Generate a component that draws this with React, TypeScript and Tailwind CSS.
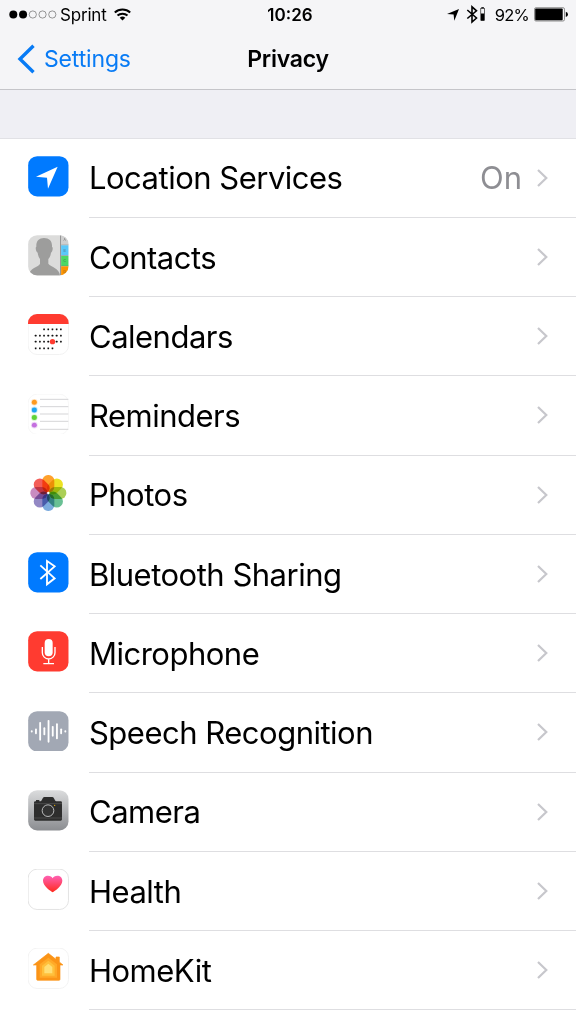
import React from 'react';

interface IconProps {
  children: React.ReactNode;
}

const Icon: React.FC<IconProps> = ({ children }) => (
  <svg viewBox="0 0 122 122" className="block h-[40.67px] w-[40.67px]">
    {children}
  </svg>
);

interface TileProps {
  fill: string;
  stroke?: string;
}

const Tile: React.FC<TileProps> = ({ fill, stroke = 'none' }) => (
  <rect x="0.5" y="0.5" width="121" height="121" rx="27" fill={fill} stroke={stroke} strokeWidth="2.5" />
);

const LocationIcon = () => (
  <Icon>
    <Tile fill="#007aff" />
    <path d="M89 32 60 98 57 65 24 62Z" fill="#fff" />
  </Icon>
);

const tabs = [
  { y: 0, color: '#cfcfcf', letter: 'A' },
  { y: 31, color: '#5ac8fa', letter: 'B' },
  { y: 63, color: '#4cd964', letter: 'C' },
  { y: 94, color: '#ff9500', letter: 'D' },
];

const ContactsIcon = () => (
  <Icon>
    <clipPath id="contacts">
      <rect x="0.5" y="0.5" width="121" height="121" rx="27" />
    </clipPath>
    <g clipPath="url(#contacts)">
      <rect width="122" height="122" fill="#dcdcdb" />
      <path
        d="M48 9C33 9 24 18 25 35C21 37 24 51 29 53C30 62 33 68 36 72V86C32 96 4 98 2 122H96C95 100 69 96 61 86V72C66 67 68 60 69 53C74 50 76 37 72 35C73 18 64 9 48 9Z"
        fill="#9d9d9c"
      />
      <rect x="97" width="2.5" height="122" fill="#777" />
      {tabs.map((tab) => (
        <g key={tab.letter}>
          <rect x="99.5" y={tab.y} width="23" height="30" fill={tab.color} />
          <rect x="99.5" y={tab.y + 29} width="23" height="2" fill="#777" opacity=".6" />
          <text
            x="110"
            y={tab.y + 19}
            fontSize="10"
            textAnchor="middle"
            fill="#444"
            fillOpacity=".7"
            fontFamily="Inter, sans-serif"
          >
            {tab.letter}
          </text>
        </g>
      ))}
    </g>
  </Icon>
);

// first and last visible day of each week
const weeks = [
  { y: 46, from: 2, to: 6 },
  { y: 65, from: 0, to: 6 },
  { y: 83, from: 0, to: 6 },
  { y: 103, from: 0, to: 4 },
];

const CalendarIcon = () => (
  <Icon>
    <Tile fill="#fff" stroke="#efefef" />
    <path d="M0 30V27A27 27 0 0 1 27 0H95A27 27 0 0 1 122 27V30Z" fill="#ff3b30" />
    {weeks.map((week) =>
      [0, 1, 2, 3, 4, 5, 6]
        .filter((day) => day >= week.from && day <= week.to)
        .map((day) => (
          <rect key={`${week.y}-${day}`} x={20.5 + day * 12.6} y={week.y - 2.5} width="5" height="5" rx="1" fill="#111" />
        ))
    )}
    <circle cx="73.5" cy="83" r="8" fill="#ff3b30" />
  </Icon>
);

const RemindersIcon = () => (
  <Icon>
    <Tile fill="#fff" stroke="#f5f5f5" />
    {['#ff9a1f', '#1fa5f0', '#5fd338', '#c470df'].map((color, i) => (
      <g key={color}>
        <circle cx="19" cy={25 + i * 22.8} r="10" fill={color} opacity=".25" />
        <circle cx="19" cy={25 + i * 22.8} r="7.5" fill={color} />
      </g>
    ))}
    {[16, 38, 60, 82, 106].map((y) => (
      <path key={y} d={`M36 ${y}H121`} stroke="#d5d5d7" strokeWidth="3" />
    ))}
  </Icon>
);

const petals = ['#ff9a1c', '#ebe012', '#a5cc4a', '#5dbb8c', '#72a5dc', '#8b7fc0', '#c583bd', '#f2524b'];

const PhotosIcon = () => (
  <Icon>
    <g className="isolate">
      {petals.map((color, i) => (
        <rect
          key={color}
          x="43"
          y="6"
          width="36"
          height="52"
          rx="17"
          fill={color}
          opacity=".93"
          transform={`rotate(${i * 45} 61 60)`}
          className="mix-blend-multiply"
        />
      ))}
    </g>
    <circle cx="61" cy="60" r="3.5" fill="#fff" />
  </Icon>
);

const BluetoothIcon = () => (
  <Icon>
    <Tile fill="#007aff" />
    <path d="M37 40 80 79 57 97V27L80 43 37 81" fill="none" stroke="#fff" strokeWidth="5.5" />
  </Icon>
);

const MicrophoneIcon = () => (
  <Icon>
    <Tile fill="#ff3b30" />
    <rect x="50" y="24" width="24" height="52" rx="12" fill="#fff" />
    <path d="M43 48V65A19 19 0 0 0 81 65V48M62 84V97M46 98H78" fill="none" stroke="#fff" strokeWidth="4" />
  </Icon>
);

const bars = [7, 17, 56, 24, 68, 32, 48, 17, 7];

const SpeechIcon = () => (
  <Icon>
    <Tile fill="#a2a8b4" />
    {bars.map((height, i) => (
      <rect key={i} x={8.5 + i * 12.6} y={61 - height / 2} width="5.5" height={height} rx="2.5" fill="#fff" />
    ))}
  </Icon>
);

const CameraIcon = () => (
  <Icon>
    <linearGradient id="camera" x2="0" y2="1">
      <stop stopColor="#dbdcdd" />
      <stop offset="1" stopColor="#8b8d91" />
    </linearGradient>
    <Tile fill="url(#camera)" />
    <path
      d="M18 38Q18 34 22 34H24V30H34V34H38Q41 33 43 27Q45 21 49 21H73Q77 21 79 27Q81 33 84 34H98Q102 34 102 38V88Q102 92 98 92H22Q18 92 18 88Z"
      fill="#2d2d2d"
    />
    <path d="M18 41H102M18 84H102" stroke="#5a5a5a" strokeWidth="2" />
    <circle cx="60" cy="62" r="21" fill="#2d2d2d" />
    <circle cx="60" cy="62" r="17.5" fill="#333" stroke="#b9babb" strokeWidth="3" />
    <circle cx="80" cy="46" r="2" fill="#f5b800" />
  </Icon>
);

const HealthIcon = () => (
  <Icon>
    <linearGradient id="heart" x2="0" y2="1">
      <stop stopColor="#ff61b5" />
      <stop offset="1" stopColor="#ff2a1c" />
    </linearGradient>
    <Tile fill="#fff" stroke="#dedede" />
    <path
      d="M74 70C69 66 45 52 45 35C45 26 52 20 60 20C67 20 72 23 74 28C76 23 81 20 88 20C96 20 103 26 103 35C103 52 79 66 74 70Z"
      fill="url(#heart)"
    />
  </Icon>
);

const HomeIcon = () => (
  <Icon>
    <Tile fill="#fff" stroke="#f0f0f0" />
    <path
      d="M61 16 84 34V27H94V42L105 51H96V94Q96 97 93 97H29Q26 97 26 94V51H16Z"
      fill="#fb9417"
      stroke="#fb9417"
      strokeWidth="2"
      strokeLinejoin="round"
    />
    <path d="M61 29 87 49V89H35V49Z" fill="#ffa928" />
    <path d="M61 38 80 53V83H42V53Z" fill="#ffc03c" />
    <path d="M61 47 73 57V76H49V57Z" fill="#ffde75" />
  </Icon>
);

interface Row {
  label: string;
  icon: React.ReactNode;
  value?: string;
}

const rows: Row[] = [
  { label: 'Location Services', icon: <LocationIcon />, value: 'On' },
  { label: 'Contacts', icon: <ContactsIcon /> },
  { label: 'Calendars', icon: <CalendarIcon /> },
  { label: 'Reminders', icon: <RemindersIcon /> },
  { label: 'Photos', icon: <PhotosIcon /> },
  { label: 'Bluetooth Sharing', icon: <BluetoothIcon /> },
  { label: 'Microphone', icon: <MicrophoneIcon /> },
  { label: 'Speech Recognition', icon: <SpeechIcon /> },
  { label: 'Camera', icon: <CameraIcon /> },
  { label: 'Health', icon: <HealthIcon /> },
  { label: 'HomeKit', icon: <HomeIcon /> },
];

const StatusBar = () => (
  <div className="grid h-[30px] grid-cols-[1fr_auto_1fr] items-center pr-[8px] pl-[12px] text-[17px] leading-[30px]">
    <div className="-ml-[3px] flex items-center">
      <svg viewBox="0 0 48 10" className="mr-[3px] h-[10px] w-[48px]">
        {[0, 1, 2, 3, 4].map((i) => (
          <circle
            key={i}
            cx={4.3 + i * 9.75}
            cy="4.5"
            r={i < 2 ? 4 : 3.6}
            fill={i < 2 ? '#000' : 'none'}
            stroke={i < 2 ? 'none' : '#555'}
            strokeWidth=".6"
          />
        ))}
      </svg>
      <span className="tracking-[-0.2px]">Sprint</span>
      <svg viewBox="0 0 17 13" className="-mt-[2px] ml-[7px] h-[13px] w-[17px]" fill="none" stroke="#000" strokeWidth="2">
        <path d="M.8 4.5A11.3 11.3 0 0 1 16.2 4.5M3.5 7.6A7.4 7.4 0 0 1 13.5 7.6" />
        <path d="M8.5 12.4 5.7 9.8A4.1 4.1 0 0 1 11.3 9.8Z" fill="#000" stroke="none" />
      </svg>
    </div>
    <span className="font-semibold">10:26</span>
    <div className="flex items-center justify-end">
      <svg viewBox="0 0 12 12" className="mr-[7px] h-[12px] w-[12px]">
        <path d="M12 0 7.3 11.7 6.6 5.6 0 5.1Z" />
      </svg>
      <svg viewBox="0 0 20 19" className="-mt-[2px] mr-[9px] h-[19px] w-[20px]" fill="none" stroke="#000">
        <path d="M1.3 5 10.5 13 6 17V1.8L10.5 5.8 1.3 13.5" strokeWidth="1.6" />
        <rect x="14.8" y="3.6" width="3.6" height="12" strokeWidth=".6" />
        <path d="M15.3 2.7H17.9" strokeWidth="1" />
        <rect x="15" y="8.5" width="3.2" height="7" fill="#000" stroke="none" />
      </svg>
      <span className="text-[16.5px] tracking-[-0.75px]">92%</span>
      <svg viewBox="0 0 34 15" className="-mt-[2px] ml-[5px] h-[15px] w-[34px]">
        <rect x=".5" y=".7" width="30" height="13.3" rx="1.5" fill="none" stroke="#777" strokeWidth=".8" />
        <rect x="1.2" y="1.5" width="27.5" height="11.7" rx=".8" />
        <path d="M31.8 4.8Q34 5.5 34 7.4T31.8 10Z" />
      </svg>
    </div>
  </div>
);

const NavBar = () => (
  <div className="grid h-[59px] grid-cols-[1fr_auto_1fr] items-center px-[17px] text-[23px] leading-[59px]">
    <div className="flex items-center text-[#087bf5]">
      <svg viewBox="0 0 18 30" className="-mt-[1px] mr-[9px] h-[30px] w-[18px]" fill="none" stroke="currentColor" strokeWidth="3.4">
        <path d="M16.5 1.8 3 15 16.5 28.2" />
      </svg>
      <span className="tracking-[-0.15px]">Settings</span>
    </div>
    <h1 className="font-semibold tracking-[-0.25px]">Privacy</h1>
  </div>
);

const SettingsRow: React.FC<Row> = ({ label, icon, value }) => (
  <li className="flex h-[79.25px] pl-[28px]">
    <div className="mr-[20.33px] pt-[17.25px]">{icon}</div>
    <div className="flex flex-1 items-center border-b border-[#dedee1] pr-[28px]">
      <span className="flex-1 pt-[2px] text-[31px] tracking-[-0.5px]">{label}</span>
      {value && <span className="mr-[15px] pt-[2px] text-[31px] text-[#8e8e93]">{value}</span>}
      <svg viewBox="0 0 11 18" className="h-[18px] w-[11px]" fill="none" stroke="#c7c7cc" strokeWidth="2.2">
        <path d="M1 1 9.3 9 1 17" />
      </svg>
    </div>
  </li>
);

export default function App() {
  return (
    <div className="h-[1024px] w-[576px] overflow-hidden bg-white font-['Inter',sans-serif] text-black">
      <header className="h-[90px] border-b border-[#c5c5c9] bg-[#f5f5f7]">
        <StatusBar />
        <NavBar />
      </header>
      <div className="h-[48.6px] border-b border-[#e1e1e5] bg-[#efeff4]" />
      <ul>
        {rows.map((row) => (
          <SettingsRow key={row.label} {...row} />
        ))}
      </ul>
    </div>
  );
}
